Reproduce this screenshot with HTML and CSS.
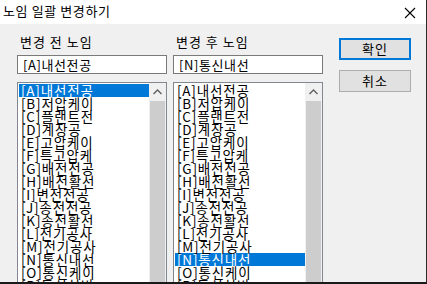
FILE: index.html
```html
<!DOCTYPE html>
<html>
<head>
  <meta charset="utf-8">
  <link rel="stylesheet" href="styles.css">
</head>
<body>
  <div class="dialog">
    <!-- Title bar -->
    <div class="titlebar">
      <span class="title">노임 일괄 변경하기</span>
      <svg class="close" width="12" height="12" viewBox="0 0 12 12">
        <path d="M1 1 L11 11 M11 1 L1 11" stroke="#000" stroke-width="1.1" fill="none"/>
      </svg>
    </div>

    <div class="client">
      <!-- Before column -->
      <div class="column">
        <div class="label">변경 전 노임</div>
        <div class="textbox">[A]내선전공</div>
        <div class="listbox">
          <div class="items">
            <div class="item selected">[A]내선전공</div>
            <div class="item">[B]저압케이</div>
            <div class="item">[C]플랜트전</div>
            <div class="item">[D]계장공</div>
            <div class="item">[E]고압케이</div>
            <div class="item">[F]특고압케</div>
            <div class="item">[G]배전전공</div>
            <div class="item">[H]배전활선</div>
            <div class="item">[I]변전전공</div>
            <div class="item">[J]송전전공</div>
            <div class="item">[K]송전활선</div>
            <div class="item">[L]전기공사</div>
            <div class="item">[M]전기공사</div>
            <div class="item">[N]통신내선</div>
            <div class="item">[O]통신케이</div>
            <div class="item">[P]통신설비</div>
          </div>
          <div class="scrollbar">
            <div class="arrow">
              <svg width="9" height="6" viewBox="0 0 9 6"><path d="M0.5 5 L4.5 1 L8.5 5" stroke="#606060" stroke-width="1.4" fill="none"/></svg>
            </div>
            <div class="thumb"></div>
          </div>
        </div>
      </div>

      <!-- After column -->
      <div class="column">
        <div class="label">변경 후 노임</div>
        <div class="textbox">[N]통신내선</div>
        <div class="listbox">
          <div class="items">
            <div class="item">[A]내선전공</div>
            <div class="item">[B]저압케이</div>
            <div class="item">[C]플랜트전</div>
            <div class="item">[D]계장공</div>
            <div class="item">[E]고압케이</div>
            <div class="item">[F]특고압케</div>
            <div class="item">[G]배전전공</div>
            <div class="item">[H]배전활선</div>
            <div class="item">[I]변전전공</div>
            <div class="item">[J]송전전공</div>
            <div class="item">[K]송전활선</div>
            <div class="item">[L]전기공사</div>
            <div class="item">[M]전기공사</div>
            <div class="item selected">[N]통신내선</div>
            <div class="item">[O]통신케이</div>
            <div class="item">[P]통신설비</div>
          </div>
          <div class="scrollbar">
            <div class="arrow">
              <svg width="9" height="6" viewBox="0 0 9 6"><path d="M0.5 5 L4.5 1 L8.5 5" stroke="#606060" stroke-width="1.4" fill="none"/></svg>
            </div>
            <div class="thumb"></div>
          </div>
        </div>
      </div>

      <!-- Buttons -->
      <div class="buttons">
        <div class="button default">확인</div>
        <div class="button">취소</div>
      </div>
    </div>
  </div>
</body>
</html>
```

FILE: styles.css
```css
  body {
    margin: 0;
    font-family: "Noto Sans CJK KR", "Noto Sans", sans-serif;
    font-size: 13px;
    color: #000;
    background: #f0f0f0;
  }

  .dialog {
    width: 427px;
    height: 284px;
    box-sizing: border-box;
    border-right: 1px solid #2b2b2b;
    border-bottom: 2px solid #1a1a1a;
    background: #f0f0f0;
    overflow: hidden;
    display: flex;
    flex-direction: column;
  }

  .titlebar {
    height: 24px;
    flex-shrink: 0;
    background: #fff;
    display: flex;
    align-items: center;
    justify-content: space-between;
    padding: 0 10px 0 3px;
  }

  .title {
    font-size: 13px;
    letter-spacing: 0.6px;
    line-height: 24px;
    margin-top: -2px;
  }

  .close {
    margin-top: 2px;
  }

  .client {
    flex: 1;
    display: flex;
    padding: 10px 0 0 17px;
    min-height: 0;
  }

  .column {
    width: 150px;
    margin-right: 6px;
    display: flex;
    flex-direction: column;
  }

  .label {
    height: 16px;
    line-height: 16px;
    padding-left: 3px;
    margin-bottom: 5px;
    letter-spacing: 1px;
  }

  .textbox {
    height: 20px;
    box-sizing: border-box;
    border: 1px solid #7a7a7a;
    background: #fff;
    padding-left: 5px;
    line-height: 17px;
    margin-bottom: 8px;
    letter-spacing: 0.6px;
  }

  .listbox {
    height: 220px;
    flex-shrink: 0;
    box-sizing: border-box;
    border: 1px solid #828790;
    background: #fff;
    display: flex;
    padding-left: 1px;
  }

  .items {
    width: 130px;
    padding-top: 1px;
  }

  .item {
    height: 13px;
    line-height: 13px;
    padding-left: 2px;
    white-space: nowrap;
    font-size: 13.5px;
    letter-spacing: 0.8px;
  }

  .item.selected {
    background: #0078d7;
    color: #fff;
  }

  .scrollbar {
    width: 17px;
    background: #f0f0f0;
    display: flex;
    flex-direction: column;
    align-items: center;
  }

  .arrow {
    height: 17px;
    width: 17px;
    display: flex;
    align-items: center;
    justify-content: center;
  }

  .thumb {
    width: 15px;
    flex: 1;
    margin-top: 1px;
    background: #cdcdcd;
  }

  .buttons {
    margin-left: 10px;
    padding-top: 4px;
    display: flex;
    flex-direction: column;
    gap: 10px;
  }

  .button {
    width: 72px;
    height: 22px;
    box-sizing: border-box;
    border: 1px solid #adadad;
    background: #e1e1e1;
    text-align: center;
    line-height: 19px;
    letter-spacing: 1px;
  }

  .button.default {
    border: 2px solid #0078d7;
    line-height: 17px;
  }
```
